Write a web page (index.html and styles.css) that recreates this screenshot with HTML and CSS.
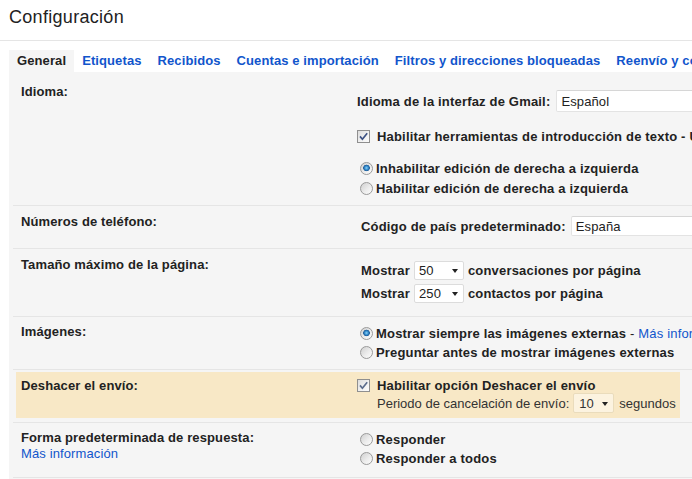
FILE: index.html
```html
<!DOCTYPE html>
<html lang="es">
<head>
<meta charset="utf-8">
<title>Configuración</title>
<link rel="stylesheet" href="styles.css">
</head>
<body>
<header class="page-header">
  <h1 class="title">Configuración</h1>
</header>
<div class="settings">
  <nav class="tabs">
    <span class="tab active">General</span>
    <a class="tab" href="#">Etiquetas</a>
    <a class="tab" href="#">Recibidos</a>
    <a class="tab" href="#">Cuentas e importación</a>
    <a class="tab" href="#">Filtros y direcciones bloqueadas</a>
    <a class="tab" href="#">Reenvío y correo POP/IMAP</a>
  </nav>
  <div class="panel">
    <div class="row row-lang">
      <div class="label">Idioma:</div>
      <div class="value">
        <div class="field-line">
          <span class="b">Idioma de la interfaz de Gmail:</span>
          <span class="input input-lang">Español</span>
        </div>
        <div class="check-line">
          <span class="checkbox"><svg width="13" height="13" viewBox="0 0 13 13"><path d="M3 6.4 L5.4 9.2 L10.2 3.3" fill="none" stroke="#3d5283" stroke-width="1.7"/></svg></span>
          <span class="b">Habilitar herramientas de introducción de texto - Utilizar varios métodos de entrada</span>
        </div>
        <div class="radio-group">
          <div class="opt"><span class="radio on"></span><span class="b">Inhabilitar edición de derecha a izquierda</span></div>
          <div class="opt"><span class="radio"></span><span class="b">Habilitar edición de derecha a izquierda</span></div>
        </div>
      </div>
    </div>

    <div class="row row-phone">
      <div class="label">Números de teléfono:</div>
      <div class="value">
        <div class="field-line indent">
          <span class="b">Código de país predeterminado:</span>
          <span class="input input-country">España</span>
        </div>
      </div>
    </div>

    <div class="row row-size">
      <div class="label">Tamaño máximo de la página:</div>
      <div class="value">
        <div class="select-line indent">
          <span class="b">Mostrar</span>
          <span class="select select-wide">50<span class="arrow"></span></span>
          <span class="b">conversaciones por página</span>
        </div>
        <div class="select-line indent">
          <span class="b">Mostrar</span>
          <span class="select select-wide">250<span class="arrow"></span></span>
          <span class="b">contactos por página</span>
        </div>
      </div>
    </div>

    <div class="row row-images">
      <div class="label">Imágenes:</div>
      <div class="value">
        <div class="opt opt-tight"><span class="radio on"></span><span class="b">Mostrar siempre las imágenes externas</span>&nbsp;-&nbsp;<a class="link" href="#">Más información</a></div>
        <div class="opt opt-tight"><span class="radio"></span><span class="b">Preguntar antes de mostrar imágenes externas</span></div>
      </div>
    </div>

    <div class="row row-undo">
      <div class="highlight">
        <div class="label">Deshacer el envío:</div>
        <div class="value">
          <div class="check-line check-undo">
            <span class="checkbox"><svg width="13" height="13" viewBox="0 0 13 13"><path d="M3 6.4 L5.4 9.2 L10.2 3.3" fill="none" stroke="#5b6c8c" stroke-width="1.7"/></svg></span>
            <span class="b">Habilitar opción Deshacer el envío</span>
          </div>
          <div class="period-line">
            <span>Periodo de cancelación de envío:</span>
            <span class="select select-small">10<span class="arrow"></span></span>
            <span>segundos</span>
          </div>
        </div>
      </div>
    </div>

    <div class="row row-reply">
      <div class="label">Forma predeterminada de respuesta:<br><a class="link" href="#">Más información</a></div>
      <div class="value">
        <div class="opt opt-tight"><span class="radio"></span><span class="b">Responder</span></div>
        <div class="opt opt-tight"><span class="radio"></span><span class="b">Responder a todos</span></div>
      </div>
    </div>
  </div>
</div>
</body>
</html>
```

FILE: styles.css
```css
* { box-sizing: border-box; }

html, body {
  margin: 0;
  padding: 0;
  overflow: hidden;
}

body {
  width: 692px;
  height: 479px;
  font-family: "Liberation Sans", Arial, sans-serif;
  font-size: 13px;
  color: #222;
  background: #fff;
  letter-spacing: 0.12px;
}

.page-header {
  padding: 7px 9px 13px;
  border-bottom: 1px solid #e5e5e5;
}

.title {
  margin: 0;
  font-size: 18px;
  font-weight: normal;
  line-height: 20px;
  color: #222;
  letter-spacing: 0.3px;
}

.settings {
  margin: 9px 0 0 9px;
  width: 1100px;
}

.tabs {
  display: flex;
  white-space: nowrap;
}

.tab {
  padding: 0 8px;
  line-height: 22px;
  font-weight: bold;
  color: #15c;
  text-decoration: none;
  letter-spacing: 0.1px;
}

.tab.active {
  background: #f5f5f5;
  color: #222;
}

.panel {
  background: #f5f5f5;
  padding-bottom: 30px;
}

.row {
  display: grid;
  grid-template-columns: 344px 1fr;
  margin-left: 4px;
  border-bottom: 1px solid #e5e5e5;
  white-space: nowrap;
  padding-top: 8px;
}

.label {
  padding-left: 8px;
  font-weight: bold;
  line-height: 16px;
}

.label .link { font-weight: normal; }

.value {
  display: flex;
  flex-direction: column;
  letter-spacing: 0.18px;
}

.b { font-weight: bold; }

.link {
  color: #15c;
  text-decoration: none;
  font-weight: normal;
}

.indent { padding-left: 4px; }

/* inputs */
.field-line {
  display: flex;
  align-items: center;
}

.input {
  display: flex;
  align-items: center;
  background: #fff;
  border: 1px solid #e3e3e3;
  border-top-color: #d6d6d6;
  border-radius: 2px;
  padding-left: 4px;
  width: 220px;
  letter-spacing: 0.12px;
}

.input-lang {
  height: 22px;
  margin-left: 6px;
}

.input-country {
  height: 20px;
  margin-left: 5px;
}

/* checkbox */
.check-line {
  display: flex;
  align-items: center;
  height: 16px;
}

.checkbox {
  display: inline-block;
  width: 13px;
  height: 13px;
  border: 1px solid #8f8f8f;
  background: linear-gradient(135deg, #dcdcdc 0%, #f2f2f2 60%, #fbfbfb 100%);
  margin-right: 7px;
  position: relative;
  flex: none;
}

.checkbox svg {
  position: absolute;
  left: -1px;
  top: -1px;
}

/* radios */
.opt {
  display: flex;
  align-items: center;
  height: 20px;
}

.opt-tight { height: 19px; }

.radio {
  display: inline-block;
  width: 13px;
  height: 13px;
  border-radius: 50%;
  border: 1px solid #9a9a9a;
  background: linear-gradient(135deg, #cfcfcf 0%, #ececec 55%, #fdfdfd 100%);
  margin: 0 3px;
  flex: none;
}

.radio.on {
  background:
    radial-gradient(circle at 50% 45%, #8fd3f7 0, #3c95d4 1.6px, #1d5c9a 3px, rgba(29,92,154,0) 3.6px),
    linear-gradient(135deg, #cfcfcf 0%, #ececec 55%, #fdfdfd 100%);
}

/* selects */
.select-line {
  display: flex;
  align-items: center;
  height: 22px;
}

.select-line + .select-line { margin-top: 1px; }

.select {
  position: relative;
  display: inline-flex;
  align-items: center;
  background: #fff;
  border: 1px solid #dcdcdc;
  border-radius: 2px;
  padding-left: 4px;
  margin: 0 4px;
  font-weight: normal;
  letter-spacing: 0.12px;
}

.select-wide {
  width: 50px;
  height: 19px;
}

.select-small {
  width: 41px;
  height: 20px;
  padding-left: 5px;
  margin: 0 5px 0 4px;
  background: #fcf3e0;
  border-color: #eadcbc;
}

.arrow {
  position: absolute;
  right: 5px;
  top: 50%;
  margin-top: -1px;
  width: 0;
  height: 0;
  border-left: 3.5px solid transparent;
  border-right: 3.5px solid transparent;
  border-top: 4px solid #222;
}

/* rows */
.row-lang { padding-top: 12px; padding-bottom: 7px; }
.row-lang .value { padding-top: 6px; }
.row-lang .check-line { margin-top: 16px; }
.row-lang .radio-group { margin-top: 14px; }

.row-phone { padding-bottom: 12px; }
.row-phone .value { padding-top: 2px; }

.row-size { padding-bottom: 12px; }
.row-size .value { padding-top: 2px; }

.row-images { padding-top: 7px; padding-bottom: 7px; }
.row-reply { padding-top: 7px; padding-bottom: 9px; }

.row-undo {
  display: block;
  padding: 2px 0 4px 3px;
}

.highlight {
  display: grid;
  grid-template-columns: 341px 1fr;
  width: 664px;
  background: #f8e8c6;
  padding: 6px 0 5px 0;
}

.highlight .label { padding-left: 5px; }

.check-undo { height: 15px; }

.period-line {
  display: flex;
  align-items: center;
  height: 20px;
  padding-left: 20px;
  color: #333;
  letter-spacing: 0;
}
```
